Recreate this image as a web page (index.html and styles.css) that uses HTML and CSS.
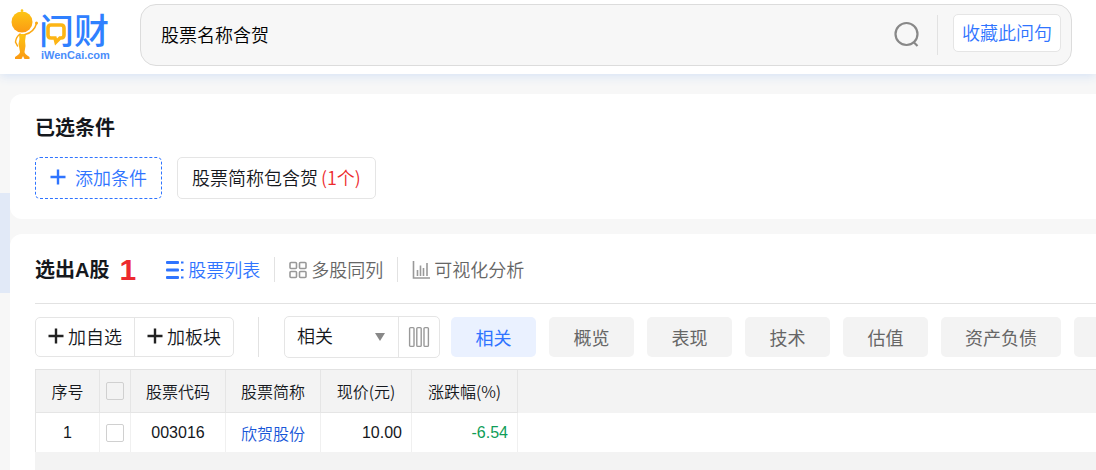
FILE: index.html
```html
<!DOCTYPE html>
<html lang="zh-CN">
<head>
<meta charset="utf-8">
<meta name="viewport" content="width=device-width, initial-scale=1">
<title>问财</title>
<link rel="stylesheet" href="styles.css">
</head>
<body>
<header class="topbar">
  <a class="logo" href="#" aria-label="问财 iWenCai.com">
    <svg width="104" height="56" viewBox="0 0 104 56">
      <defs>
        <linearGradient id="gold" x1="0" y1="0" x2="0" y2="1">
          <stop offset="0" stop-color="#fdc513"/>
          <stop offset="1" stop-color="#fb9a14"/>
        </linearGradient>
      </defs>
      <circle cx="11" cy="6.500" r="1.300" fill="#fdc513"/>
      <path d="M11 6v4" stroke="#fdc513" stroke-width="1"/>
      <circle cx="11" cy="18" r="10.500" fill="url(#gold)"/>
      <path d="M8 30h7q-1.500 7-.5 12l-1 6q0 2 5 5v2h-5l-1.500-3-1.500 3H4v-2q5-3 5-5L7.500 40Q9 34 8 30z" fill="url(#gold)"/>
      <path d="M9 30q-4 3-4.500 8l2 4M14 30.500q9-2 11.500-11" fill="none" stroke="#fba914" stroke-width="1.500" stroke-linecap="round"/>
      <circle cx="25.500" cy="19" r="1.500" fill="#fba914"/>
      <text class="logo-name" x="28" y="40">问财</text>
      <path d="M36 18h19v20H36z" fill="#fff"/>
      <path d="M40 21h10q3 0 3 3v7q0 3-3 3h-1l-4 4-1-4h-4q-3 0-3-3v-7q0-3 3-3z" fill="none" stroke="#fdb515" stroke-width="3.600"/>
      <text class="logo-site" x="30" y="55">iWenCai.com</text>
    </svg>
  </a>
  <form class="search">
    <input class="search-input" type="text" aria-label="问句" value="股票名称含贺">
    <button class="search-go" type="button" aria-label="搜索">
      <svg width="28" height="28" viewBox="0 0 28 28" fill="none" stroke="#888" stroke-width="2.200"><circle cx="14.500" cy="13" r="11"/><path d="M21.500 21l4 4"/></svg>
    </button>
    <span class="search-rule"></span>
    <button class="save" type="button">收藏此问句</button>
  </form>
</header>
<aside class="side-handle"></aside>
<main class="content">
  <section class="card">
    <h2 class="title">已选条件</h2>
    <div class="chips">
      <button class="chip chip-add" type="button">
        <svg width="16" height="16" viewBox="0 0 16 16" stroke="#2f74ff" stroke-width="2.400"><path d="M8 .500v15M.500 8h15"/></svg>
        添加条件
      </button>
      <button class="chip" type="button">股票简称包含贺 <span class="count">(1个)</span></button>
    </div>
  </section>
  <section class="card card-result">
    <div class="result-head">
      <h2 class="title">选出A股</h2>
      <strong class="total">1</strong>
      <nav class="views">
        <a class="view view-on" href="#">
          <svg width="18" height="20" viewBox="0 0 18 20" fill="#2f74ff"><rect y="1" width="13" height="3" rx="1"/><rect y="8.500" width="13" height="3" rx="1"/><rect y="16" width="13" height="3" rx="1"/><path d="M15 1.500h2.500v2H15zM15 9h2.500v2H15zM15 16.500h2.500v2H15z"/></svg>
          <span class="view-text">股票列表</span>
        </a>
        <a class="view" href="#">
          <svg width="18" height="18" viewBox="0 0 18 18" fill="none" stroke="#999" stroke-width="1.600"><rect x="1" y="1.500" width="6.500" height="6" rx="1"/><rect x="10.500" y="1.500" width="6.500" height="6" rx="1"/><rect x="1" y="10.500" width="6.500" height="6" rx="1"/><rect x="10.500" y="10.500" width="6.500" height="6" rx="1"/></svg>
          <span class="view-text">多股同列</span>
        </a>
        <a class="view" href="#">
          <svg width="18" height="18" viewBox="0 0 18 18" fill="none" stroke="#999" stroke-width="1.600"><path d="M1.500 0v17H18M5.500 15V9M8.500 15V4.500M11.500 15V7M15 15V2"/></svg>
          <span class="view-text">可视化分析</span>
        </a>
      </nav>
    </div>
    <div class="toolbar">
      <div class="pair">
        <button class="pair-btn" type="button">
          <svg width="16" height="16" viewBox="0 0 16 16" stroke="#222" stroke-width="2.400"><path d="M8 .500v15M.500 8h15"/></svg>
          加自选
        </button>
        <button class="pair-btn" type="button">
          <svg width="16" height="16" viewBox="0 0 16 16" stroke="#222" stroke-width="2.400"><path d="M8 .500v15M.500 8h15"/></svg>
          加板块
        </button>
      </div>
      <span class="rule"></span>
      <div class="picker">
        <select class="picker-select" aria-label="指标分组"><option>相关</option></select>
        <svg class="picker-arrow" width="10" height="8" viewBox="0 0 10 8"><path d="M0 0h10L5 8z" fill="#888"/></svg>
        <button class="picker-cols" type="button" aria-label="列设置">
          <svg width="20" height="20" viewBox="0 0 20 20" fill="none" stroke="#999" stroke-width="1.400"><rect x=".6" y=".6" width="4.400" height="18.800" rx="1"/><rect x="7.800" y=".6" width="4.400" height="18.800" rx="1"/><rect x="15" y=".6" width="4.400" height="18.800" rx="1"/></svg>
        </button>
      </div>
      <div class="tabs">
        <button class="tab tab-on" type="button">相关</button>
        <button class="tab" type="button">概览</button>
        <button class="tab" type="button">表现</button>
        <button class="tab" type="button">技术</button>
        <button class="tab" type="button">估值</button>
        <button class="tab" type="button">资产负债</button>
        <button class="tab" type="button" aria-label="更多"></button>
      </div>
    </div>
    <div class="sheet">
      <table class="grid">
        <colgroup><col class="c-no"><col class="c-check"><col class="c-code"><col class="c-name"><col class="c-price"><col class="c-change"><col></colgroup>
        <thead>
          <tr><th>序号</th><th><input class="tick" type="checkbox" aria-label="全选"></th><th>股票代码</th><th>股票简称</th><th>现价(元)</th><th>涨跌幅(%)</th><th class="rest"></th></tr>
        </thead>
        <tbody>
          <tr><td>1</td><td><input class="tick" type="checkbox" aria-label="选择欣贺股份"></td><td>003016</td><td><a class="stock" href="#">欣贺股份</a></td><td class="num">10.00</td><td class="num down">-6.54</td><td class="rest"></td></tr>
        </tbody>
      </table>
    </div>
  </section>
</main>
</body>
</html>
```
FILE: styles.css
```css
* { box-sizing: border-box; }

body {
  margin: 0;
  min-height: 100vh;
  display: flex;
  flex-direction: column;
  overflow: hidden;
  background: #f7f7f7;
  color: #15181d;
  font-family: "Liberation Sans", "Noto Sans CJK SC", sans-serif;
  font-size: 18px;
  font-weight: 350;
}

a { color: inherit; text-decoration: none; }

button, input, select {
  margin: 0;
  padding: 0;
  border: 0;
  background: none;
  color: inherit;
  font: inherit;
}

svg { display: block; flex: none; overflow: visible; }

.topbar {
  display: flex;
  align-items: flex-start;
  height: 74px;
  padding: 4px 24px 0 11px;
  background: #fff;
  box-shadow: 0 2px 10px #d5e2f5;
}

.logo { width: 129px; flex: none; }

.logo-name {
  fill: #2f80ff;
  font-size: 35px;
  font-weight: 500;
}

.logo-site { fill: #4a8dfb; font-size: 11px; font-weight: 700; }

.search {
  display: flex;
  flex: 1;
  align-items: center;
  height: 62px;
  padding: 0 10px 0 20px;
  border: 1px solid #dcdcdc;
  border-radius: 16px;
  background: #f7f7f7;
}

.search-input { flex: 1; min-width: 0; height: 40px; padding-bottom: 2px; color: #000; outline: 0; }
.search-rule { width: 1px; height: 40px; margin: 0 15px 0 17px; background: #e2e2e2; }

.save {
  height: 38px;
  margin-bottom: 4px;
  padding: 0 8px 2px;
  border: 1px solid #e5e5e5;
  border-radius: 5px;
  background: #fff;
  color: #2f74ff;
}

.side-handle {
  position: fixed;
  left: 0;
  top: 193px;
  width: 10px;
  height: 100px;
  background: #e1e9f7;
}

.content {
  display: flex;
  flex: 1;
  flex-direction: column;
  gap: 15px;
  padding: 20px 0 0 10px;
}

.card {
  padding: 21px 0 20px 25px;
  border-radius: 12px 0 0 12px;
  background: #fff;
}

.title { margin: 0; font-size: 20px; line-height: 26px; font-weight: 700; }

.chips { display: flex; gap: 15px; margin-top: 16px; }

.chip {
  display: flex;
  align-items: center;
  gap: 3px;
  height: 42px;
  padding: 0 14px 2px;
  border: 1px solid #e5e5e5;
  border-radius: 5px;
}

.chip-add { gap: 9px; border: 1px dashed #2f74ff; color: #2f74ff; }
.count { color: #ed2a2e; font-family: "Noto Sans CJK SC", sans-serif; line-height: 20px; }

.card-result {
  display: flex;
  flex: 1;
  flex-direction: column;
  padding: 0 0 0 25px;
  border-radius: 12px 0 0 0;
}

.result-head {
  display: flex;
  align-items: center;
  height: 70px;
  padding-top: 2px;
  border-bottom: 1px solid #e2e2e2;
}

.total { margin: 0 15px 0 10px; color: #ed2a2e; font-size: 30px; font-weight: 700; }

.views { display: flex; }

.view {
  display: flex;
  align-items: center;
  gap: 4px;
  height: 25px;
  padding: 0 14px;
  border-left: 1px solid #e2e2e2;
  color: #666;
}

.view-on { border-color: transparent; color: #2f74ff; }
.view-text { padding-bottom: 2px; }

.toolbar { display: flex; align-items: center; height: 65px; overflow: hidden; }

.pair, .picker {
  display: flex;
  flex: none;
  align-items: center;
  height: 40px;
  border: 1px solid #e5e5e5;
  border-radius: 5px;
}

.picker { position: relative; width: 156px; height: 42px; }

.pair-btn {
  display: flex;
  align-items: center;
  gap: 4px;
  height: 38px;
  padding: 0 12px 2px;
}

.pair-btn + .pair-btn { border-left: 1px solid #e5e5e5; }

.rule { flex: none; width: 1px; height: 40px; margin: 0 25px 0 24px; background: #e2e2e2; }

.picker-select { flex: 1; height: 40px; padding-left: 12px; appearance: none; outline: 0; }
.picker-arrow { position: absolute; right: 54px; top: 16px; pointer-events: none; }

.picker-cols {
  display: flex;
  align-items: center;
  justify-content: center;
  width: 41px;
  height: 40px;
  border-left: 1px solid #e5e5e5;
}

.tabs { display: flex; gap: 13px; margin-left: 11px; }

.tab {
  flex: none;
  min-width: 85px;
  height: 40px;
  padding: 0 24px;
  border-radius: 5px;
  background: #f3f3f3;
  color: #666;
  font-weight: 400;
}

.tab-on { background: #eaf1ff; color: #2f74ff; }

.sheet { flex: 1; border-top: 1px solid #e2e2e2; background: #f3f3f3; }

.grid {
  width: 100%;
  border-collapse: separate;
  border-spacing: 0;
  table-layout: fixed;
  font-size: 16px;
}

.c-no { width: 65px; }
.c-check { width: 31px; }
.c-code, .c-name { width: 95px; }
.c-price { width: 91px; }
.c-change { width: 106px; }

th, td {
  padding: 0;
  border-right: 1px solid #e5e5e5;
  font-weight: 350;
  text-align: center;
}

th {
  height: 43px;
  padding-bottom: 1px;
  border-bottom: 1px solid #e5e5e5;
  background: #f3f3f3;
  font-family: "Noto Sans CJK SC", sans-serif;
}

td { height: 39px; border-color: #f0f0f0; background: #fff; }
th:first-child, td:first-child { border-left: 1px solid #e5e5e5; }
.rest { border-right: 0; }
th.rest { border-bottom: 0; }
.num { padding-right: 9px; text-align: right; }
.down { color: #0f9d58; }
.stock { color: #1857d8; }

.tick {
  display: block;
  width: 18px;
  height: 18px;
  margin: 0 auto;
  border: 1px solid #d0d0d0;
  border-radius: 2px;
  background: transparent;
  appearance: none;
}
```
